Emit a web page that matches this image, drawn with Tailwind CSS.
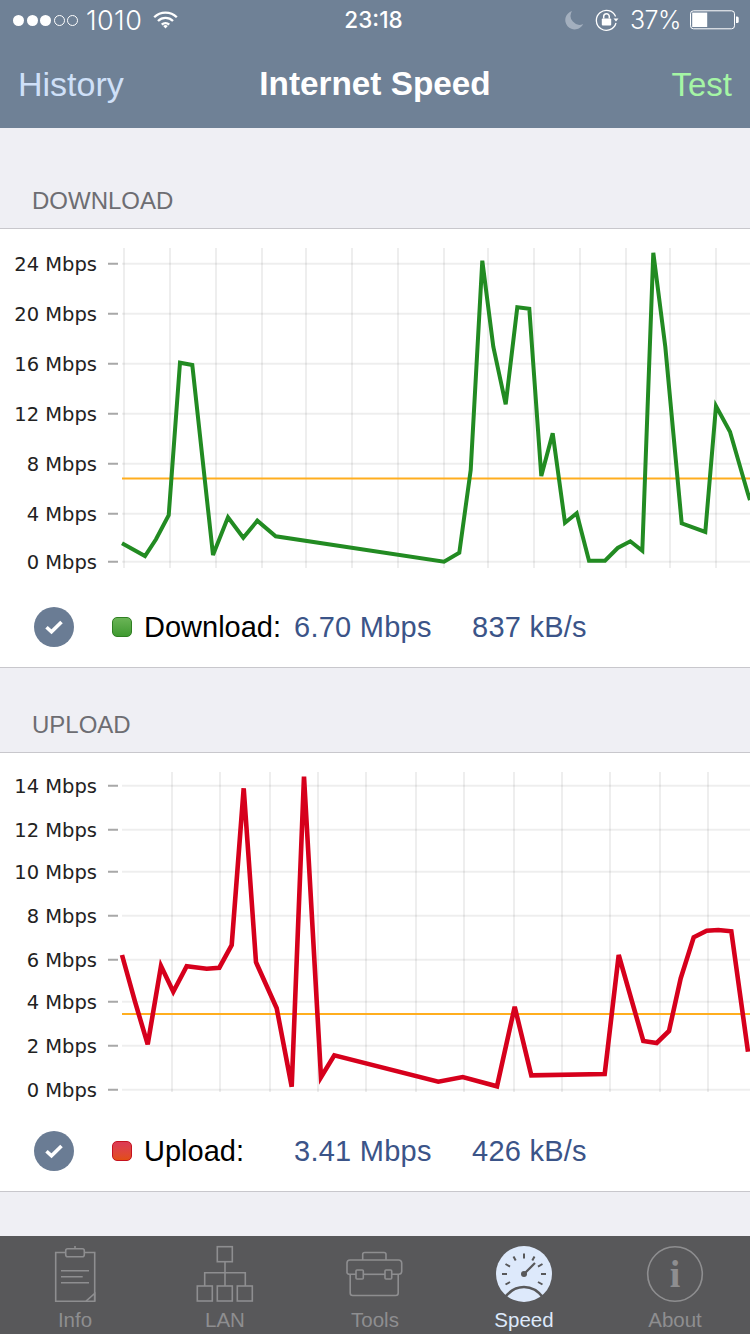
<!DOCTYPE html>
<html lang="en">
<head>
<meta charset="utf-8">
<title>Internet Speed</title>
<script src="https://cdn.jsdelivr.net/npm/@tailwindcss/browser@4"></script>
</head>
<body class="m-0">
<div class="w-[750px] h-[1334px] flex flex-col bg-[#efeff4] overflow-hidden font-['Liberation_Sans',Arial,sans-serif]">

  <header class="h-[128px] shrink-0 bg-[#6f8196] flex flex-col">
    <div class="h-[40px] grid grid-cols-[1fr_auto_1fr] items-center text-white">
      <div class="flex items-center pl-[13px]">
        <div class="flex gap-[2.5px]">
          <span class="w-[11px] h-[11px] rounded-full bg-white"></span>
          <span class="w-[11px] h-[11px] rounded-full bg-white"></span>
          <span class="w-[11px] h-[11px] rounded-full bg-white"></span>
          <span class="w-[11px] h-[11px] rounded-full border border-white"></span>
          <span class="w-[11px] h-[11px] rounded-full border border-white"></span>
        </div>
        <span class="ml-[8px] text-[27px] leading-none font-light tracking-[0.4px] font-['Inter',sans-serif]">1010</span>
        <svg class="ml-[11px]" width="25" height="18" viewBox="0 0 25 18" fill="none" stroke="#fff" stroke-width="2.3">
          <path d="M1.2 6.2a16 16 0 0 1 22.6 0"/>
          <path d="M5 10a10.6 10.6 0 0 1 15 0"/>
          <path d="M8.8 13.6a5.2 5.2 0 0 1 7.4 0"/>
          <path d="M12.5 17.6l-2.3-2.6a3.4 3.4 0 0 1 4.6 0z" fill="#fff" stroke="none"/>
        </svg>
      </div>
      <span class="pr-[3px] text-[22.5px] leading-none font-['Inter',sans-serif] font-medium">23:18</span>
      <div class="flex items-center justify-end pr-[11px]">
        <svg width="20" height="20" viewBox="0 0 20 20"><path d="M8 1a9.4 9.4 0 1 0 11.2 13A9 9 0 0 1 8 1z" fill="#a3afbe"/></svg>
        <svg class="ml-[11px]" width="25" height="24" viewBox="0 0 25 24" fill="none" stroke="#fff" stroke-width="1.3">
          <path d="M20.6 8.5A10 10 0 1 0 21 15"/>
          <path d="M18.5 10.5h5l-2.5 3z" fill="#fff" stroke="none"/>
          <rect x="6.8" y="10.5" width="9.4" height="7" rx="1" fill="#fff" stroke="none"/>
          <path d="M8.7 10.5V8.6a2.8 2.8 0 0 1 5.6 0v1.9" stroke-width="1.5"/>
        </svg>
        <span class="ml-[10px] text-[25px] leading-none font-light font-['Inter',sans-serif] tracking-[-0.5px]">37%</span>
        <svg class="ml-[9px]" width="49" height="20" viewBox="0 0 49 20" fill="none">
          <rect x="0.5" y="0.8" width="44" height="18" rx="3" stroke="#fff" stroke-width="1"/>
          <rect x="2.2" y="2.6" width="15" height="14.4" fill="#fff"/>
          <path d="M46 6.5h1.2a1.5 1.5 0 0 1 1.5 1.5v3.5a1.5 1.5 0 0 1-1.5 1.5H46z" fill="#fff"/>
        </svg>
      </div>
    </div>
    <div class="flex-1 grid grid-cols-[1fr_auto_1fr] items-center px-[18px]">
      <span class="text-[34px] leading-none text-[#cfe0f8]">History</span>
      <span class="text-[33.3px] leading-none font-bold text-white">Internet Speed</span>
      <span class="text-[33px] leading-none text-right text-[#a5f5a5]">Test</span>
    </div>
  </header>

  <main class="flex-1 flex flex-col">
    <h2 class="h-[100px] flex items-end pl-[32px] pb-[13px] text-[24px] leading-[28px] font-normal text-[#6d6d72]">DOWNLOAD</h2>
    <section class="bg-white border-y border-[#c8c7cc]">
      <svg class="block" width="750" height="358" viewBox="0 229 750 358" fill="none">
        <g stroke="#000" stroke-opacity="0.065" stroke-width="2">
          <path d="M124 248V568M170 248V568M216 248V568M262 248V568M306 248V568M352 248V568M398 248V568M444 248V568M488 248V568M534 248V568M580 248V568M626 248V568M670 248V568M716 248V568"/>
          <path d="M122 263.7H750M122 313.7H750M122 363.7H750M122 413.7H750M122 463.7H750M122 513.7H750M122 561.7H750"/>
        </g>
        <path d="M108 263.7H118M108 313.7H118M108 363.7H118M108 413.7H118M108 463.7H118M108 513.7H118M108 561.7H118" stroke="#a8a8a8" stroke-width="2"/>
        <path d="M122 478.5H750" stroke="#ffae1f" stroke-width="2"/>
        <polyline stroke="#228b22" stroke-width="4" stroke-linejoin="miter" points="122,543.3 145,556 156,539.3 168.7,515.3 180,362.7 192.3,365 213,555 228,517.3 243.3,537.7 257.3,520.7 275.7,536.3 444,561.7 459.3,552.7 470.7,470 482.3,260.7 493.3,346.7 505.7,404.3 517.3,307.3 529.3,308.7 541.3,476 552.7,433.3 565,522.7 576.7,513.3 589,560.7 605,560.7 617.7,548 630.3,541.3 642.3,550.7 653.3,252.7 665.3,346.7 681.7,523.3 705.3,532 716,406 730,431.7 748,494 750,500"/>
        <g class="font-['DejaVu_Sans',sans-serif]" font-size="19.5" fill="#222" text-anchor="end">
          <text x="97" y="270.5">24 Mbps</text>
          <text x="97" y="320.5">20 Mbps</text>
          <text x="97" y="370.5">16 Mbps</text>
          <text x="97" y="420.5">12 Mbps</text>
          <text x="97" y="470.5">8 Mbps</text>
          <text x="97" y="520.5">4 Mbps</text>
          <text x="97" y="568.5">0 Mbps</text>
        </g>
      </svg>
      <div class="h-[80px] flex items-center pl-[34px]">
        <span class="w-[40px] h-[40px] rounded-full bg-[#6a7c94] flex items-center justify-center">
          <svg width="20" height="16" viewBox="0 0 20 16" fill="none" stroke="#fff" stroke-width="3.6"><path d="M2.5 8.2l5 4.6L17.5 3"/></svg>
        </span>
        <span class="ml-[38px] w-[20px] h-[20px] rounded-[5px] border border-[#2f7f22] bg-linear-to-b from-[#6ab456] to-[#3f9a30]"></span>
        <span class="ml-[12px] w-[150px] text-[29px] leading-none text-black">Download:</span>
        <span class="w-[178px] text-[29px] leading-none tracking-[0.25px] text-[#3b5488]">6.70 Mbps</span>
        <span class="text-[29px] leading-none tracking-[0.25px] text-[#3b5488]">837 kB/s</span>
      </div>
    </section>

    <h2 class="h-[84px] flex items-end pl-[32px] pb-[13px] text-[24px] leading-[28px] font-normal text-[#6d6d72]">UPLOAD</h2>
    <section class="bg-white border-y border-[#c8c7cc]">
      <svg class="block" width="750" height="358" viewBox="0 753 750 358" fill="none">
        <g stroke="#000" stroke-opacity="0.065" stroke-width="2">
          <path d="M172 772V1092M220 772V1092M270 772V1092M318 772V1092M366 772V1092M416 772V1092M464 772V1092M514 772V1092M562 772V1092M610 772V1092M660 772V1092M708 772V1092"/>
          <path d="M122 785.7H750M122 829.7H750M122 871.7H750M122 915.7H750M122 959.7H750M122 1001.7H750M122 1045.7H750M122 1089.7H750"/>
        </g>
        <path d="M108 785.7H118M108 829.7H118M108 871.7H118M108 915.7H118M108 959.7H118M108 1001.7H118M108 1045.7H118M108 1089.7H118" stroke="#a8a8a8" stroke-width="2"/>
        <path d="M122 1014H750" stroke="#ffae1f" stroke-width="2"/>
        <polyline stroke="#d6001c" stroke-width="4.6" stroke-linejoin="miter" points="122,955 135,1001.7 147.7,1044.3 161,966 173.3,991.7 186.7,966.3 206.7,968.7 219.3,967.7 231.7,945 243.7,788.3 256,962.3 276.7,1008.3 291.7,1086.7 304,776.7 321,1077.3 334.3,1055.3 438.3,1081.7 462.7,1077 497,1086.3 514.7,1006.7 531.3,1075.3 604.7,1074 618.7,955 643.3,1041 656.7,1043 669,1031 680.7,978.3 693.7,937.3 706.7,930.7 718.3,930 731.3,931.3 748,1051.7"/>
        <g class="font-['DejaVu_Sans',sans-serif]" font-size="19.5" fill="#222" text-anchor="end">
          <text x="97" y="792.5">14 Mbps</text>
          <text x="97" y="836.5">12 Mbps</text>
          <text x="97" y="878.5">10 Mbps</text>
          <text x="97" y="922.5">8 Mbps</text>
          <text x="97" y="966.5">6 Mbps</text>
          <text x="97" y="1008.5">4 Mbps</text>
          <text x="97" y="1052.5">2 Mbps</text>
          <text x="97" y="1096.5">0 Mbps</text>
        </g>
      </svg>
      <div class="h-[80px] flex items-center pl-[34px]">
        <span class="w-[40px] h-[40px] rounded-full bg-[#6a7c94] flex items-center justify-center">
          <svg width="20" height="16" viewBox="0 0 20 16" fill="none" stroke="#fff" stroke-width="3.6"><path d="M2.5 8.2l5 4.6L17.5 3"/></svg>
        </span>
        <span class="ml-[38px] w-[20px] h-[20px] rounded-[5px] border border-[#c5121f] bg-linear-to-b from-[#dc3a55] to-[#e24e10]"></span>
        <span class="ml-[12px] w-[150px] text-[29px] leading-none text-black">Upload:</span>
        <span class="w-[178px] text-[29px] leading-none tracking-[0.25px] text-[#3b5488]">3.41 Mbps</span>
        <span class="text-[29px] leading-none tracking-[0.25px] text-[#3b5488]">426 kB/s</span>
      </div>
    </section>
  </main>

  <nav class="h-[98px] shrink-0 bg-[#58585a] grid grid-cols-5 text-[20.5px] leading-none text-[#8e8e90]">
    <div class="flex flex-col items-center pt-[8px]">
      <svg width="60" height="60" viewBox="0 0 60 60" fill="none" stroke="#8e8e90" stroke-width="1.6">
        <path d="M20.7 8.5H10.7V57.2H49.7V8.5H39.3"/>
        <rect x="20.7" y="4.7" width="18.6" height="8" rx="2"/>
        <path d="M30 4.5V2"/>
        <path d="M16 26.7H44M16 32.7H37.7M16 38.7H44"/>
        <path d="M41 57.2L49.7 49.5V57.2" stroke-width="1.6"/>
      </svg>
      <span class="mt-[6px]">Info</span>
    </div>
    <div class="flex flex-col items-center pt-[8px]">
      <svg width="60" height="60" viewBox="0 0 60 60" fill="none" stroke="#8e8e90" stroke-width="1.6">
        <rect x="22.3" y="2.7" width="15" height="15"/>
        <path d="M30 17.7V42M9.7 42V28.7H50.3V42"/>
        <rect x="2.3" y="42" width="15" height="15"/>
        <rect x="22.3" y="42" width="15" height="15"/>
        <rect x="42.3" y="42" width="15" height="15"/>
      </svg>
      <span class="mt-[6px]">LAN</span>
    </div>
    <div class="flex flex-col items-center pt-[8px]">
      <svg width="60" height="60" viewBox="0 0 60 60" fill="none" stroke="#8e8e90" stroke-width="1.6">
        <path d="M17.7 16V10.5a2 2 0 0 1 2-2H39a2 2 0 0 1 2 2V16"/>
        <path d="M11 30.3H5a3 3 0 0 1-3-1.5V19a3 3 0 0 1 3-3H53.7a3 3 0 0 1 3 3V27.5a3 3 0 0 1-3 2.8H46.7"/>
        <path d="M18.3 30.3H40"/>
        <path d="M5.2 30.5V49a2.5 2.5 0 0 0 2.5 2.5H50.7a2.5 2.5 0 0 0 2.5-2.5V30.5"/>
        <rect x="11" y="26" width="7.3" height="9" rx="1"/>
        <rect x="40" y="26" width="6.7" height="9" rx="1"/>
      </svg>
      <span class="mt-[6px]">Tools</span>
    </div>
    <div class="flex flex-col items-center pt-[8px] pr-[2px] text-[#dde9fb]">
      <svg width="60" height="60" viewBox="-1 0 60 60" fill="none">
        <circle cx="29" cy="30" r="28" fill="#dde9fb"/>
        <g stroke="#58585a" stroke-width="2">
          <path d="M29 9.5V14.5M18.5 12.5L20.7 16.5M39.5 12.5L37.3 16.5M10.5 20L15 22.6M47.5 20L43 22.6M7 30H12M46 30H51M10.5 40.5L15 38M47.5 40.5L43 38"/>
          <path d="M29 30L40 19" stroke-width="2.2"/>
          <path d="M9.5 54C15 46.5 21 43 29 43C37 43 43 46.5 48.5 54" stroke-width="2.6"/>
        </g>
        <circle cx="29" cy="30" r="3" fill="#58585a"/>
      </svg>
      <span class="mt-[6px]">Speed</span>
    </div>
    <div class="flex flex-col items-center pt-[8px]">
      <svg width="60" height="60" viewBox="0 0 60 60" fill="none">
        <circle cx="30" cy="30" r="27.3" stroke="#8e8e90" stroke-width="1.6"/>
        <text x="30" y="43" text-anchor="middle" font-size="38" font-weight="700" fill="#8e8e90" class="font-['Liberation_Serif',serif]">i</text>
      </svg>
      <span class="mt-[6px]">About</span>
    </div>
  </nav>
</div>
</body>
</html>
